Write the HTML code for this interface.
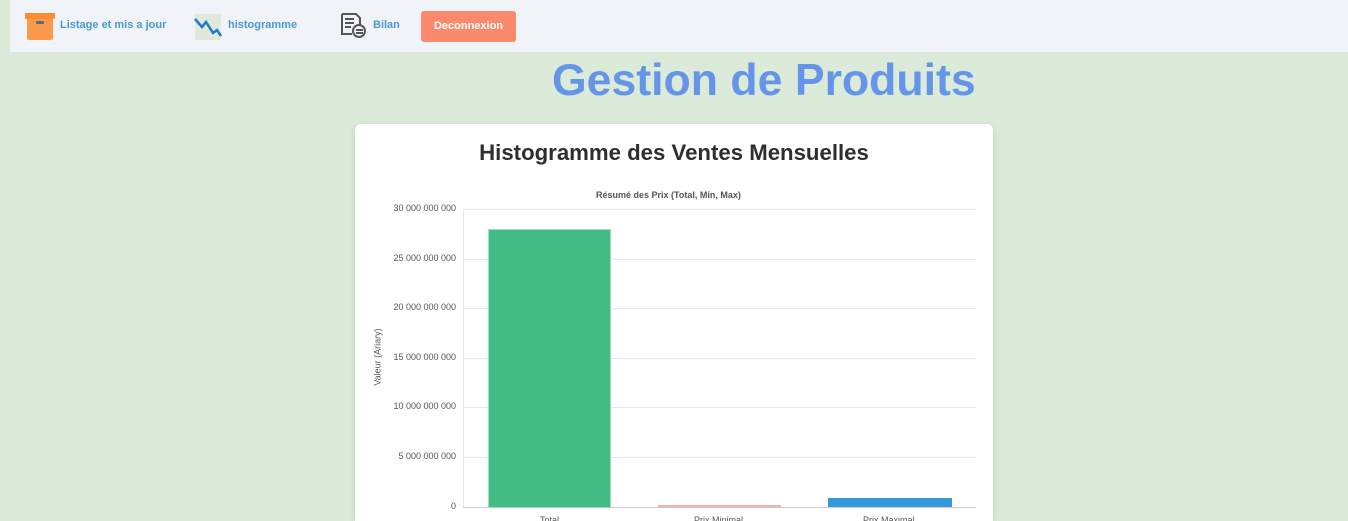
<!DOCTYPE html><html><head><meta charset="utf-8"><style>
html{overflow:hidden;height:521px}
body{margin:0;width:1348px;height:521px;overflow:hidden;background:#dcebd9;font-family:"Liberation Sans",sans-serif;position:relative}
.nav{position:absolute;left:10px;top:0;width:1338px;height:52px;background:#f0f4f8}
.a{position:absolute;top:19px;font-size:11px;font-weight:bold;color:#4a9acb}
.btn{position:absolute;left:421px;top:11px;width:95px;height:31px;background:#fb8a6c;border-radius:3px;color:#fff;font-size:11px;font-weight:bold;text-align:center;line-height:31px}
h1{position:absolute;left:552px;top:56px;margin:0;font-size:44.6px;color:#6595e8;font-weight:bold}
.card{position:absolute;left:355px;top:124px;width:638px;height:397px;background:#fff;border-radius:6px 6px 0 0;box-shadow:0 2px 8px rgba(0,0,0,.12)}
.t{position:absolute;left:0;width:638px;text-align:center;top:16px;font-size:22.2px;font-weight:bold;color:#2e2e2e}
.g{position:absolute;left:463px;width:513px;height:1px;background:#e6e6e6}
.l{position:absolute;right:892px;font-size:9px;color:#555;text-align:right}
</style></head><body>
<div class="nav">
<svg style="position:absolute;left:14px;top:12px" width="32" height="30"><rect x="3" y="4" width="26" height="24" fill="#fd9a4a" rx="2"/><rect x="1" y="1" width="30" height="6" fill="#fb8c35"/><rect x="12" y="9" width="8" height="3" rx="1" fill="#5a6a80"/></svg>
<div class="a" style="left:50px">Listage et mis a jour</div>
<svg style="position:absolute;left:184px;top:13px" width="28" height="28"><rect x="1" y="1" width="26" height="26" fill="#dfeadb"/><path d="M1 6 L8 14 L12 9 L19 20 L23 17 L27 23" stroke="#1f7ad0" stroke-width="2.5" fill="none"/></svg>
<div class="a" style="left:218px">histogramme</div>
<svg style="position:absolute;left:330px;top:12px" width="28" height="28" fill="none" stroke="#555" stroke-width="2"><path d="M2 2h14l4 4v8M2 2v20h10M5 7h9M5 11h9M5 15h6"/><circle cx="19" cy="19" r="6"/><path d="M16 18h7M16 21h7"/></svg>
<div class="a" style="left:363px">Bilan</div>
</div>
<div class="btn">Deconnexion</div>
<h1>Gestion de Produits</h1>
<div class="card"><div class="t">Histogramme des Ventes Mensuelles</div>
<div style="position:absolute;left:241px;top:66px;font-size:9px;font-weight:bold;color:#555">Résumé des Prix (Total, Min, Max)</div>
<div style="position:absolute;left:-6px;top:228px;transform:rotate(-90deg);font-size:9px;color:#555;white-space:nowrap">Valeur (Ariary)</div>
</div>
<div class="g" style="top:209px"></div><div class="g" style="top:259px"></div><div class="g" style="top:308px"></div><div class="g" style="top:358px"></div><div class="g" style="top:407px"></div><div class="g" style="top:457px"></div><div class="g" style="top:507px;background:#ccc"></div>
<div style="position:absolute;left:463px;top:209px;width:1px;height:298px;background:#e6e6e6"></div>
<div class="l" style="top:203px">30 000 000 000</div><div class="l" style="top:253px">25 000 000 000</div><div class="l" style="top:302px">20 000 000 000</div><div class="l" style="top:352px">15 000 000 000</div><div class="l" style="top:401px">10 000 000 000</div><div class="l" style="top:451px">5 000 000 000</div><div class="l" style="top:501px">0</div>
<div style="position:absolute;left:488px;top:229px;width:121px;height:277px;background:#42ba83;border:1px solid #9fe0c0"></div>
<div style="position:absolute;left:658px;top:505px;width:123px;height:2px;background:#f6b4a8"></div>
<div style="position:absolute;left:828px;top:498px;width:124px;height:9px;background:#3498db"></div>
<div style="position:absolute;left:540px;top:515px;font-size:9px;color:#555">Total</div>
<div style="position:absolute;left:694px;top:515px;font-size:9px;color:#555">Prix Minimal</div>
<div style="position:absolute;left:863px;top:515px;font-size:9px;color:#555">Prix Maximal</div>
</body></html>
